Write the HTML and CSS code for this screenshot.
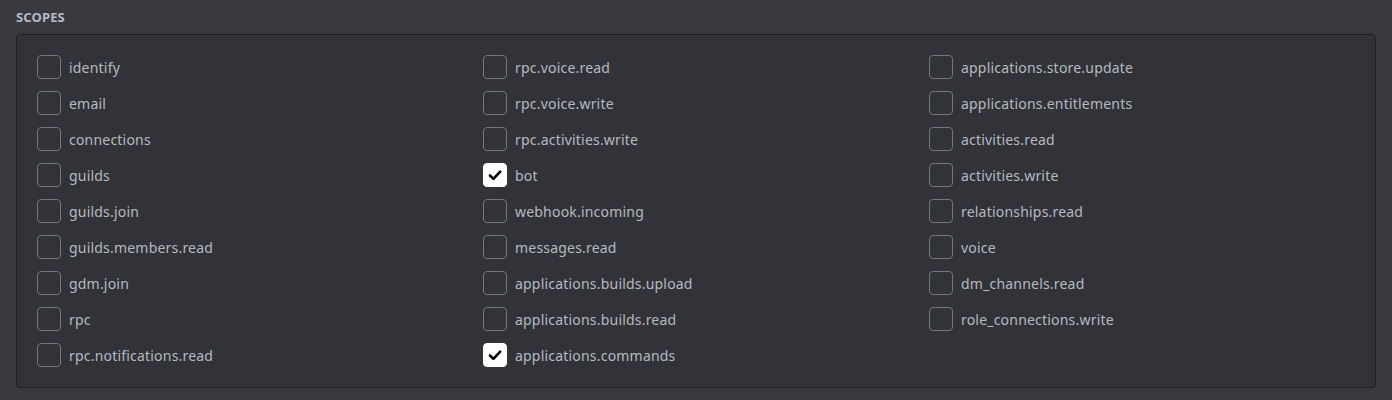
FILE: index.html
```html
<!DOCTYPE html>
<html>
<head>
<meta charset="utf-8">
<link rel="stylesheet" href="styles.css">
</head>
<body>
<div class="page">
  <h2 class="title">Scopes</h2>
  <div class="box">
    <div class="grid">
      <label class="item"><span class="cb"></span><span class="lbl">identify</span></label>
      <label class="item"><span class="cb"></span><span class="lbl">rpc.voice.read</span></label>
      <label class="item"><span class="cb"></span><span class="lbl">applications.store.update</span></label>

      <label class="item"><span class="cb"></span><span class="lbl">email</span></label>
      <label class="item"><span class="cb"></span><span class="lbl">rpc.voice.write</span></label>
      <label class="item"><span class="cb"></span><span class="lbl">applications.entitlements</span></label>

      <label class="item"><span class="cb"></span><span class="lbl">connections</span></label>
      <label class="item"><span class="cb"></span><span class="lbl">rpc.activities.write</span></label>
      <label class="item"><span class="cb"></span><span class="lbl">activities.read</span></label>

      <label class="item"><span class="cb"></span><span class="lbl">guilds</span></label>
      <label class="item"><span class="cb checked"><svg viewBox="0 0 24 24" width="24" height="24"><path d="M7 12.5l3.4 3.4 6.8-7.2" fill="none" stroke="#000" stroke-width="2.6" stroke-linecap="round" stroke-linejoin="round"/></svg></span><span class="lbl">bot</span></label>
      <label class="item"><span class="cb"></span><span class="lbl">activities.write</span></label>

      <label class="item"><span class="cb"></span><span class="lbl">guilds.join</span></label>
      <label class="item"><span class="cb"></span><span class="lbl">webhook.incoming</span></label>
      <label class="item"><span class="cb"></span><span class="lbl">relationships.read</span></label>

      <label class="item"><span class="cb"></span><span class="lbl">guilds.members.read</span></label>
      <label class="item"><span class="cb"></span><span class="lbl">messages.read</span></label>
      <label class="item"><span class="cb"></span><span class="lbl">voice</span></label>

      <label class="item"><span class="cb"></span><span class="lbl">gdm.join</span></label>
      <label class="item"><span class="cb"></span><span class="lbl">applications.builds.upload</span></label>
      <label class="item"><span class="cb"></span><span class="lbl">dm_channels.read</span></label>

      <label class="item"><span class="cb"></span><span class="lbl">rpc</span></label>
      <label class="item"><span class="cb"></span><span class="lbl">applications.builds.read</span></label>
      <label class="item"><span class="cb"></span><span class="lbl">role_connections.write</span></label>

      <label class="item"><span class="cb"></span><span class="lbl">rpc.notifications.read</span></label>
      <label class="item"><span class="cb checked"><svg viewBox="0 0 24 24" width="24" height="24"><path d="M7 12.5l3.4 3.4 6.8-7.2" fill="none" stroke="#000" stroke-width="2.6" stroke-linecap="round" stroke-linejoin="round"/></svg></span><span class="lbl">applications.commands</span></label>
    </div>
  </div>
</div>
</body>
</html>
```
FILE: styles.css
```css
html, body {
  margin: 0;
  padding: 0;
  background: #383a40;
  height: 100%;
}
.page {
  padding: 9px 16px 0 16px;
  font-family: "Noto Sans", "Open Sans", sans-serif;
}
.title {
  margin: 0 0 9px 0;
  font-size: 13px;
  line-height: 16px;
  font-weight: 700;
  text-transform: uppercase;
  color: #b5bac1;
  letter-spacing: 0.01em;
}
.box {
  background: #313338;
  border: 1px solid #1e1f22;
  border-radius: 4px;
  padding: 20px;
}
.grid {
  display: grid;
  grid-template-columns: repeat(3, 1fr);
  column-gap: 20px;
  row-gap: 12px;
}
.item {
  display: flex;
  align-items: center;
  gap: 8px;
  height: 24px;
}
.cb {
  box-sizing: border-box;
  width: 24px;
  height: 24px;
  border: 1px solid #72767d;
  border-radius: 4px;
  flex: none;
  display: flex;
  align-items: center;
  justify-content: center;
}
.cb svg {
  flex: none;
}
.cb.checked {
  background: #ffffff;
  border-color: #ffffff;
}
.lbl {
  font-size: 14px;
  line-height: 18px;
  letter-spacing: 0.2px;
  color: #b5bac1;
  padding-top: 1px;
}
```
